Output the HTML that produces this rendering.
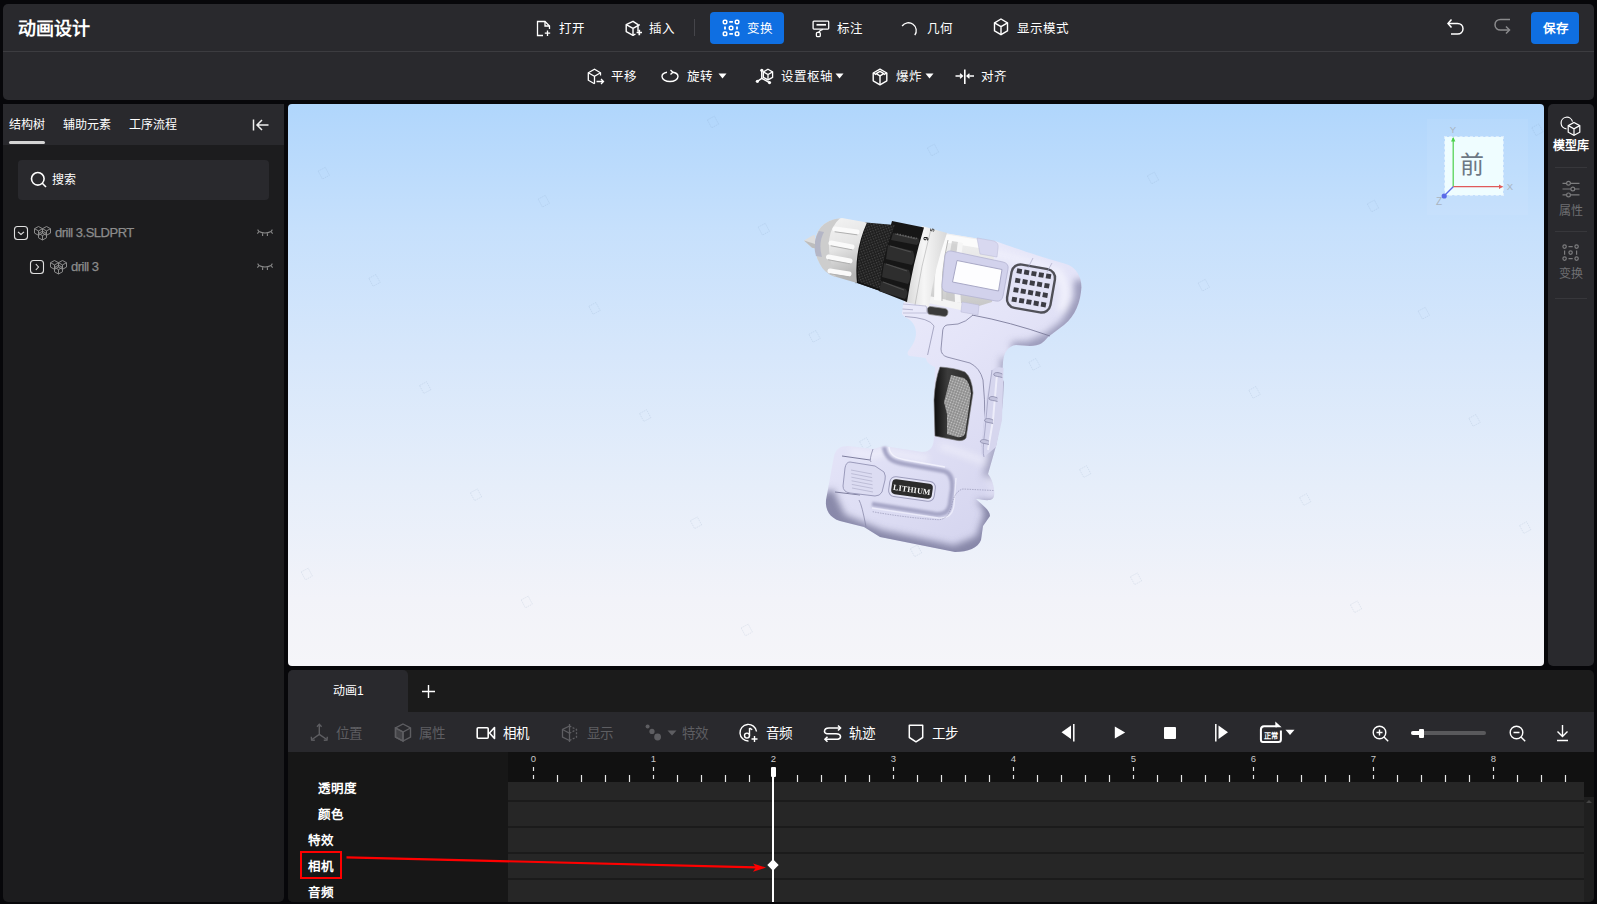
<!DOCTYPE html>
<html lang="zh-CN"><head><meta charset="utf-8">
<style>
*{box-sizing:border-box;margin:0;padding:0}
html,body{width:1597px;height:904px;overflow:hidden;background:#07070a;font-family:"Liberation Sans",sans-serif;color:#fff}
.abs{position:absolute}
.panel{background:#29292d}
.t{position:absolute;white-space:nowrap;line-height:1;font-weight:500}
svg{position:absolute;overflow:visible}
</style></head><body>

<!-- top toolbar -->
<div class="abs panel" style="left:3px;top:4px;width:1591px;height:96px;border-radius:5px"></div>
<div class="abs" style="left:3px;top:51px;width:1591px;height:1px;background:#3c3c40"></div>
<div class="t" style="left:18px;top:19.5px;font-size:18px;font-weight:bold">动画设计</div>

<!-- top row items -->
<svg style="left:536px;top:20px" width="16" height="17" viewBox="0 0 16 17" fill="none" stroke="#fff" stroke-width="1.3">
<path d="M7 15.5H1.5V1.5H9L13.5 6V9"/><path d="M9 1.5V6H13.5"/><path d="M11.5 10.5V16M8.8 13.2H14.2"/></svg>
<div class="t" style="left:559px;top:23px;font-size:12.5px">打开</div>
<svg style="left:624px;top:18px" width="20" height="20" viewBox="0 0 20 20" fill="none" stroke="#fff" stroke-width="1.4" stroke-linejoin="round">
<path d="M14 13.5V6.6L9 3.3L2.2 6.6V13.6L9 17.4L11.5 16"/><path d="M2.2 6.6L9 10.4L15.8 6.6M9 10.4V17.4"/><path d="M15.3 11.8V17.2M12.6 14.5H18" stroke-width="1.7"/></svg>
<div class="t" style="left:649px;top:23px;font-size:12.5px">插入</div>
<div class="abs" style="left:694px;top:19px;width:1px;height:17px;background:#45454a"></div>
<div class="abs" style="left:710px;top:12px;width:74px;height:32px;background:#0f6fe2;border-radius:4px"></div>
<svg style="left:722px;top:19px" width="18" height="18" viewBox="0 0 18 18" fill="none" stroke="#fff" stroke-width="1.5">
<rect x="1.3" y="1.2" width="3.5" height="3.5" rx="1.1"/><rect x="13.3" y="1.2" width="3.5" height="3.5" rx="1.1"/><rect x="1.3" y="13" width="3.5" height="3.5" rx="1.1"/><rect x="13.3" y="13" width="3.5" height="3.5" rx="1.1"/><rect x="7.3" y="7.2" width="3.5" height="3.5" rx="1.1"/>
<path d="M7.3 2.9H10.9M7.3 14.8H10.9M3 7.4V10.6M15 7.4V10.6" stroke-width="1.8"/></svg>
<div class="t" style="left:747px;top:23px;font-size:12.5px">变换</div>
<svg style="left:812px;top:20px" width="18" height="18" viewBox="0 0 18 18" fill="none" stroke="#fff" stroke-width="1.3">
<rect x="1.1" y="1.2" width="15.6" height="7.9" rx="0.8"/><path d="M4.5 4.8H14" stroke-width="1.7"/><path d="M10.8 9.3Q8 10.2 6.6 12.4"/><rect x="4.4" y="12.4" width="3.9" height="4.3" rx="1.2"/></svg>
<div class="t" style="left:837px;top:23px;font-size:12.5px">标注</div>
<svg style="left:901px;top:21px" width="18" height="16" viewBox="0 0 18 16" fill="none" stroke="#fff" stroke-width="1.3">
<path d="M1.1 5.0A7.8 7.8 0 1 1 13.8 14.1"/></svg>
<div class="t" style="left:927px;top:23px;font-size:12.5px">几何</div>
<svg style="left:993px;top:18px" width="16" height="18" viewBox="0 0 16 18" fill="none" stroke="#fff" stroke-width="1.4">
<path d="M8 1L14.5 4.8V12.8L8 16.6L1.5 12.8V4.8Z"/><path d="M1.5 4.8L8 8.6L14.5 4.8M8 8.6V16.6"/></svg>
<div class="t" style="left:1017px;top:23px;font-size:12.5px">显示模式</div>
<svg style="left:1446px;top:18px" width="19" height="18" viewBox="0 0 19 18" fill="none" stroke="#fff" stroke-width="1.5">
<path d="M5.5 1.5L2 5.5L5.5 9.5"/><path d="M2 5.5H11.5C14.5 5.5 17 7.5 17 10.8C17 14 14.5 16 11.5 16H5"/></svg>
<svg style="left:1493px;top:18px" width="19" height="18" viewBox="0 0 19 18" fill="none" stroke="#8a8a8c" stroke-width="1.5">
<path d="M17 1.5H7.5C4.5 1.5 2 3.5 2 6.8C2 10 4.5 12 7.5 12H16"/><path d="M13 8.5L16.5 12L13 15.5"/></svg>
<div class="abs" style="left:1531px;top:12px;width:48px;height:32px;background:#0f6fe2;border-radius:4px"></div>
<div class="t" style="left:1543px;top:23px;font-size:12.5px;font-weight:bold">保存</div>

<!-- second row -->
<svg style="left:587px;top:68px" width="18" height="18" viewBox="0 0 18 18" fill="none" stroke="#fff" stroke-width="1.3">
<path d="M13.5 7.5V4.8L7.5 1.3L1.3 4.8V12.2L7.5 15.8"/><path d="M1.3 4.8L7.5 8.3L13.5 4.8M7.5 8.3V15.8"/><path d="M9.5 13.5H16.5M14 11L16.5 13.5L14 16"/></svg>
<div class="t" style="left:611px;top:71px;font-size:12.5px">平移</div>
<svg style="left:661px;top:69px" width="18" height="14" viewBox="0 0 18 14" fill="none" stroke="#fff" stroke-width="1.4">
<path d="M6 3.3C3 3.8 1 5.3 1 7.5C1 10.3 4.6 12.5 9 12.5C13.4 12.5 17 10.3 17 7.5C17 5.2 14.8 3.6 11.5 3.2"/><path d="M9.5 1L11.8 3.2L9.5 5.4"/></svg>
<div class="t" style="left:687px;top:71px;font-size:12.5px">旋转</div>
<svg style="left:718px;top:73px" width="9" height="6" viewBox="0 0 9 6"><path d="M0.5 0.5H8.5L4.5 5.5Z" fill="#fff"/></svg>
<svg style="left:750px;top:62px" width="30" height="28" viewBox="0 0 30 28" fill="none" stroke="#fff" stroke-width="1.3">
<path d="M18 7.3L22.6 9.9V15.3L18 17.9L13.4 15.3V9.9Z"/><path d="M13.4 9.9L18 12.5L22.6 9.9M18 12.5V17.9"/><path d="M11.8 8.2V16.4L7.4 19.3M11.8 16.4L19.5 20.6" stroke-width="1.5"/><circle cx="11.8" cy="8.3" r="1.6" fill="#fff" stroke="none"/><circle cx="7.4" cy="19.3" r="1.6" fill="#fff" stroke="none"/><circle cx="19.5" cy="20.6" r="1.6" fill="#fff" stroke="none"/></svg>
<div class="t" style="left:781px;top:71px;font-size:12.5px">设置枢轴</div>
<svg style="left:835px;top:73px" width="9" height="6" viewBox="0 0 9 6"><path d="M0.5 0.5H8.5L4.5 5.5Z" fill="#fff"/></svg>
<svg style="left:872px;top:68px" width="16" height="18" viewBox="0 0 16 18" fill="none" stroke="#fff" stroke-width="1.4" stroke-linejoin="round">
<path d="M8 1.2L14.8 5V12.8L8 16.8L1.2 12.8V5Z"/><path d="M8 3.4L11.8 5.6L8 7.8L4.2 5.6Z"/><path d="M8 7.8V16.8M1.2 5L4.2 6.6M14.8 5L11.8 6.6"/></svg>
<div class="t" style="left:896px;top:71px;font-size:12.5px">爆炸</div>
<svg style="left:925px;top:73px" width="9" height="6" viewBox="0 0 9 6"><path d="M0.5 0.5H8.5L4.5 5.5Z" fill="#fff"/></svg>
<svg style="left:955px;top:67px" width="20" height="18" viewBox="0 0 20 18" fill="none" stroke="#fff" stroke-width="1.3">
<path d="M9.8 2.5V17" stroke-width="1.6"/><path d="M0.5 9H7.5M5 6.8L7.5 9L5 11.2M19 9H12M14.5 6.8L12 9L14.5 11.2"/></svg>
<div class="t" style="left:981px;top:71px;font-size:12.5px">对齐</div>

<!-- left panel -->
<div class="abs" style="left:3px;top:104px;width:281px;height:798px;background:#1c1c1e;border-radius:0 0 5px 5px"></div>
<div class="abs panel" style="left:3px;top:104px;width:281px;height:41px"></div>
<div class="t" style="left:9px;top:118.5px;font-size:12px">结构树</div>
<div class="t" style="left:63px;top:118.5px;font-size:12px">辅助元素</div>
<div class="t" style="left:129px;top:118.5px;font-size:12px">工序流程</div>
<div class="abs" style="left:9px;top:141px;width:36px;height:3px;background:#d4d4d4;border-radius:1.5px"></div>
<svg style="left:252px;top:119px" width="18" height="12" viewBox="0 0 18 12" fill="none" stroke="#eee" stroke-width="1.5">
<path d="M1.5 0.5V11.5"/><path d="M16.5 6H5M10 1L5 6L10 11"/></svg>
<div class="abs panel" style="left:18px;top:160px;width:251px;height:40px;border-radius:4px"></div>
<svg style="left:30px;top:171px" width="18" height="18" viewBox="0 0 18 18" fill="none" stroke="#fff" stroke-width="1.6">
<circle cx="7.8" cy="7.8" r="6.3"/><path d="M12.3 12.3L16 16"/></svg>
<div class="t" style="left:52px;top:173.5px;font-size:12px">搜索</div>
<svg style="left:14px;top:226px" width="14" height="14" viewBox="0 0 14 14" fill="none" stroke="#e0e0e0" stroke-width="1.1">
<rect x="0.5" y="0.5" width="13" height="13" rx="3"/><path d="M4 5.8L7 8.5L10 5.8"/></svg>
<svg style="left:33.5px;top:225.5px" width="18" height="15" viewBox="0 0 18 15" fill="none" stroke="#8c8c8c" stroke-width="1"><path d="M4.5 0.5 L8.5 2.7 L8.5 7.1 L4.5 9.3 L0.5 7.1 L0.5 2.7Z M0.5 2.7 L4.5 4.9 L8.5 2.7 M4.5 4.9 V9.3 M12.5 0.5 L16.5 2.7 L16.5 7.1 L12.5 9.3 L8.5 7.1 L8.5 2.7Z M8.5 2.7 L12.5 4.9 L16.5 2.7 M12.5 4.9 V9.3 M8.5 5.2 L12.5 7.4 L12.5 11.8 L8.5 14.0 L4.5 11.8 L4.5 7.4Z M4.5 7.4 L8.5 9.6 L12.5 7.4 M8.5 9.6 V14.0"/></svg>
<div class="t" style="left:55px;top:226px;font-size:13px;color:#8c8c8c;letter-spacing:-0.5px;-webkit-text-stroke:0.25px #8c8c8c">drill 3.SLDPRT</div>
<svg style="left:30px;top:260px" width="14" height="14" viewBox="0 0 14 14" fill="none" stroke="#e0e0e0" stroke-width="1.1">
<rect x="0.5" y="0.5" width="13" height="13" rx="3"/><path d="M5.8 4L8.5 7L5.8 10"/></svg>
<svg style="left:49.5px;top:259.5px" width="18" height="15" viewBox="0 0 18 15" fill="none" stroke="#8c8c8c" stroke-width="1"><path d="M4.5 0.5 L8.5 2.7 L8.5 7.1 L4.5 9.3 L0.5 7.1 L0.5 2.7Z M0.5 2.7 L4.5 4.9 L8.5 2.7 M4.5 4.9 V9.3 M12.5 0.5 L16.5 2.7 L16.5 7.1 L12.5 9.3 L8.5 7.1 L8.5 2.7Z M8.5 2.7 L12.5 4.9 L16.5 2.7 M12.5 4.9 V9.3 M8.5 5.2 L12.5 7.4 L12.5 11.8 L8.5 14.0 L4.5 11.8 L4.5 7.4Z M4.5 7.4 L8.5 9.6 L12.5 7.4 M8.5 9.6 V14.0"/></svg>
<div class="t" style="left:71px;top:260px;font-size:13px;color:#8c8c8c;letter-spacing:-0.5px;-webkit-text-stroke:0.25px #8c8c8c">drill 3</div>
<svg style="left:256px;top:228px" width="18" height="10" viewBox="0 0 18 10" fill="none" stroke="#8a8a8a" stroke-width="1.1">
<path d="M3 3.5Q9 6.6 15 3.5M3 3.5L1.6 1.6M3 3.5L1.4 5.6M15 3.5L16.4 1.6M15 3.5L16.6 5.6M6.6 4.9V8M11.4 4.9V8"/></svg>
<svg style="left:256px;top:262px" width="18" height="10" viewBox="0 0 18 10" fill="none" stroke="#8a8a8a" stroke-width="1.1">
<path d="M3 3.5Q9 6.6 15 3.5M3 3.5L1.6 1.6M3 3.5L1.4 5.6M15 3.5L16.4 1.6M15 3.5L16.6 5.6M6.6 4.9V8M11.4 4.9V8"/></svg>

<!-- viewport -->
<div class="abs" style="left:288px;top:104px;width:1256px;height:562px;border-radius:4px;background:linear-gradient(#b0d6fc 0%,#c6e0fc 22%,#d7e7fb 45%,#e6eefa 68%,#f2f3f9 88%,#f5f5f9 100%)"></div>

<!-- wm --><svg style="left:0;top:0" width="1597" height="904" viewBox="0 0 1597 904"><rect x="709.0" y="117.5" width="8" height="9" transform="rotate(-28 713.0 122.0)" fill="none" stroke="#6a8aaa" stroke-opacity="0.16" stroke-width="0.8" stroke-dasharray="1.5 0.8"/><rect x="929.0" y="145.5" width="8" height="9" transform="rotate(-28 933.0 150.0)" fill="none" stroke="#6a8aaa" stroke-opacity="0.16" stroke-width="0.8" stroke-dasharray="1.5 0.8"/><rect x="1149.0" y="173.5" width="8" height="9" transform="rotate(-28 1153.0 178.0)" fill="none" stroke="#6a8aaa" stroke-opacity="0.16" stroke-width="0.8" stroke-dasharray="1.5 0.8"/><rect x="1369.0" y="201.5" width="8" height="9" transform="rotate(-28 1373.0 206.0)" fill="none" stroke="#6a8aaa" stroke-opacity="0.16" stroke-width="0.8" stroke-dasharray="1.5 0.8"/><rect x="319.8" y="168.7" width="8" height="9" transform="rotate(-28 323.8 173.2)" fill="none" stroke="#6a8aaa" stroke-opacity="0.16" stroke-width="0.8" stroke-dasharray="1.5 0.8"/><rect x="539.8" y="196.7" width="8" height="9" transform="rotate(-28 543.8 201.2)" fill="none" stroke="#6a8aaa" stroke-opacity="0.16" stroke-width="0.8" stroke-dasharray="1.5 0.8"/><rect x="759.8" y="224.7" width="8" height="9" transform="rotate(-28 763.8 229.2)" fill="none" stroke="#6a8aaa" stroke-opacity="0.16" stroke-width="0.8" stroke-dasharray="1.5 0.8"/><rect x="979.8" y="252.7" width="8" height="9" transform="rotate(-28 983.8 257.2)" fill="none" stroke="#6a8aaa" stroke-opacity="0.16" stroke-width="0.8" stroke-dasharray="1.5 0.8"/><rect x="1199.8" y="280.7" width="8" height="9" transform="rotate(-28 1203.8 285.2)" fill="none" stroke="#6a8aaa" stroke-opacity="0.16" stroke-width="0.8" stroke-dasharray="1.5 0.8"/><rect x="1419.8" y="308.7" width="8" height="9" transform="rotate(-28 1423.8 313.2)" fill="none" stroke="#6a8aaa" stroke-opacity="0.16" stroke-width="0.8" stroke-dasharray="1.5 0.8"/><rect x="370.5" y="275.9" width="8" height="9" transform="rotate(-28 374.5 280.4)" fill="none" stroke="#6a8aaa" stroke-opacity="0.16" stroke-width="0.8" stroke-dasharray="1.5 0.8"/><rect x="590.5" y="303.9" width="8" height="9" transform="rotate(-28 594.5 308.4)" fill="none" stroke="#6a8aaa" stroke-opacity="0.16" stroke-width="0.8" stroke-dasharray="1.5 0.8"/><rect x="810.5" y="331.9" width="8" height="9" transform="rotate(-28 814.5 336.4)" fill="none" stroke="#6a8aaa" stroke-opacity="0.16" stroke-width="0.8" stroke-dasharray="1.5 0.8"/><rect x="1030.5" y="359.9" width="8" height="9" transform="rotate(-28 1034.5 364.4)" fill="none" stroke="#6a8aaa" stroke-opacity="0.16" stroke-width="0.8" stroke-dasharray="1.5 0.8"/><rect x="1250.5" y="387.9" width="8" height="9" transform="rotate(-28 1254.5 392.4)" fill="none" stroke="#6a8aaa" stroke-opacity="0.16" stroke-width="0.8" stroke-dasharray="1.5 0.8"/><rect x="1470.5" y="415.9" width="8" height="9" transform="rotate(-28 1474.5 420.4)" fill="none" stroke="#6a8aaa" stroke-opacity="0.16" stroke-width="0.8" stroke-dasharray="1.5 0.8"/><rect x="421.2" y="383.1" width="8" height="9" transform="rotate(-28 425.2 387.6)" fill="none" stroke="#6a8aaa" stroke-opacity="0.16" stroke-width="0.8" stroke-dasharray="1.5 0.8"/><rect x="641.2" y="411.1" width="8" height="9" transform="rotate(-28 645.2 415.6)" fill="none" stroke="#6a8aaa" stroke-opacity="0.16" stroke-width="0.8" stroke-dasharray="1.5 0.8"/><rect x="861.2" y="439.1" width="8" height="9" transform="rotate(-28 865.2 443.6)" fill="none" stroke="#6a8aaa" stroke-opacity="0.16" stroke-width="0.8" stroke-dasharray="1.5 0.8"/><rect x="1081.2" y="467.1" width="8" height="9" transform="rotate(-28 1085.2 471.6)" fill="none" stroke="#6a8aaa" stroke-opacity="0.16" stroke-width="0.8" stroke-dasharray="1.5 0.8"/><rect x="1301.2" y="495.1" width="8" height="9" transform="rotate(-28 1305.2 499.6)" fill="none" stroke="#6a8aaa" stroke-opacity="0.16" stroke-width="0.8" stroke-dasharray="1.5 0.8"/><rect x="1521.2" y="523.1" width="8" height="9" transform="rotate(-28 1525.2 527.6)" fill="none" stroke="#6a8aaa" stroke-opacity="0.16" stroke-width="0.8" stroke-dasharray="1.5 0.8"/><rect x="472.0" y="490.3" width="8" height="9" transform="rotate(-28 476.0 494.8)" fill="none" stroke="#6a8aaa" stroke-opacity="0.16" stroke-width="0.8" stroke-dasharray="1.5 0.8"/><rect x="692.0" y="518.3" width="8" height="9" transform="rotate(-28 696.0 522.8)" fill="none" stroke="#6a8aaa" stroke-opacity="0.16" stroke-width="0.8" stroke-dasharray="1.5 0.8"/><rect x="912.0" y="546.3" width="8" height="9" transform="rotate(-28 916.0 550.8)" fill="none" stroke="#6a8aaa" stroke-opacity="0.16" stroke-width="0.8" stroke-dasharray="1.5 0.8"/><rect x="1132.0" y="574.3" width="8" height="9" transform="rotate(-28 1136.0 578.8)" fill="none" stroke="#6a8aaa" stroke-opacity="0.16" stroke-width="0.8" stroke-dasharray="1.5 0.8"/><rect x="1352.0" y="602.3" width="8" height="9" transform="rotate(-28 1356.0 606.8)" fill="none" stroke="#6a8aaa" stroke-opacity="0.16" stroke-width="0.8" stroke-dasharray="1.5 0.8"/><rect x="302.8" y="569.5" width="8" height="9" transform="rotate(-28 306.8 574.0)" fill="none" stroke="#6a8aaa" stroke-opacity="0.16" stroke-width="0.8" stroke-dasharray="1.5 0.8"/><rect x="522.8" y="597.5" width="8" height="9" transform="rotate(-28 526.8 602.0)" fill="none" stroke="#6a8aaa" stroke-opacity="0.16" stroke-width="0.8" stroke-dasharray="1.5 0.8"/><rect x="742.8" y="625.5" width="8" height="9" transform="rotate(-28 746.8 630.0)" fill="none" stroke="#6a8aaa" stroke-opacity="0.16" stroke-width="0.8" stroke-dasharray="1.5 0.8"/><rect x="1533.4" y="125.30000000000001" width="8" height="9" transform="rotate(-28 1537.4 129.8)" fill="none" stroke="#6a8aaa" stroke-opacity="0.16" stroke-width="0.8" stroke-dasharray="1.5 0.8"/></svg><!-- /wm -->
<!-- drill -->
<svg style="left:780px;top:200px" width="320" height="370" viewBox="780 200 320 370">
<defs>
<clipPath id="silc"><path d="M944 233 L980 239 L995 241 C1010 246 1030 254 1066 264 C1078 268 1083 280 1081 292 C1079 308 1072 320 1060 328 L1048 337 C1044 342 1040 346 1030 346 L1016 345 C1008 346 1004 352 1003 362 L1002 378 L1004 382 L1003 400 L1001 420 L996 446 L988 474 C993 480 995 490 994 496 C993 502 985 500 976 499 C982 505 990 510 990 516 L983 526 L981 540 C978 548 968 552 955 552 L880 537 L864 527 L840 521 C830 518 825 510 826 500 L834 456 C836 449 840 446 848 446 L873 449 L884 446 L922 452 C931 452 934 446 934 436 L934 400 L935 367 C930 365 926 362 926 358 L910 356 C907 355.5 907 352 909 350 C913 345 916 339 916 333 C916 326 912 320 905 317 L902 314 L903 304 Z"/></clipPath>
<linearGradient id="lav" x1="0" y1="0" x2="0.6" y2="1"><stop offset="0" stop-color="#f0f0fc"/><stop offset="0.5" stop-color="#e4e4f8"/><stop offset="1" stop-color="#d4d4ee"/></linearGradient>
<linearGradient id="shadeB" x1="0" y1="0" x2="0" y2="1"><stop offset="0" stop-color="#9090b0" stop-opacity="0"/><stop offset="1" stop-color="#8080a2" stop-opacity="0.9"/></linearGradient>
<linearGradient id="shadeR" x1="0" y1="0" x2="1" y2="0"><stop offset="0" stop-color="#9898b8" stop-opacity="0"/><stop offset="1" stop-color="#9090b0" stop-opacity="0.8"/></linearGradient>
<linearGradient id="chuck" x1="0" y1="0" x2="0.3" y2="1"><stop offset="0" stop-color="#f6f6f6"/><stop offset="0.55" stop-color="#e4e4e4"/><stop offset="1" stop-color="#b4b4b4"/></linearGradient>
<linearGradient id="ring" x1="0" y1="0" x2="1" y2="0"><stop offset="0" stop-color="#d4d4d4"/><stop offset="0.45" stop-color="#f6f6f6"/><stop offset="1" stop-color="#d8d8d8"/></linearGradient>
<linearGradient id="gear" x1="0" y1="0" x2="0" y2="1"><stop offset="0" stop-color="#f2f2f2"/><stop offset="0.5" stop-color="#e4e4e4"/><stop offset="1" stop-color="#c4c4c4"/></linearGradient>
<linearGradient id="grip" x1="0" y1="0" x2="1" y2="0"><stop offset="0" stop-color="#0e0e0e"/><stop offset="0.35" stop-color="#3c3c3c"/><stop offset="1" stop-color="#2a2a2a"/></linearGradient>
<pattern id="knurl" width="2.6" height="2.6" patternUnits="userSpaceOnUse" patternTransform="rotate(-20)"><rect width="2.6" height="2.6" fill="#1e1e1e"/><rect width="1.3" height="1.3" fill="#454545"/></pattern>
<pattern id="mesh" width="2.6" height="2.6" patternUnits="userSpaceOnUse" patternTransform="rotate(20)"><rect width="2.6" height="2.6" fill="#8a8a8a"/><circle cx="1.3" cy="1.3" r="0.8" fill="#cacaca"/></pattern>
<radialGradient id="hl" cx="0.5" cy="0.5" r="0.5"><stop offset="0" stop-color="#fafaff" stop-opacity="0.9"/><stop offset="1" stop-color="#fafaff" stop-opacity="0"/></radialGradient>
<filter id="bl1" x="-20%" y="-20%" width="140%" height="140%"><feGaussianBlur stdDeviation="1.2"/></filter>
<filter id="bl4" x="-20%" y="-20%" width="140%" height="140%"><feGaussianBlur stdDeviation="3.5"/></filter>
</defs>
<path d="M944 233 L980 239 L995 241 C1010 246 1030 254 1066 264 C1078 268 1083 280 1081 292 C1079 308 1072 320 1060 328 L1048 337 C1044 342 1040 346 1030 346 L1016 345 C1008 346 1004 352 1003 362 L1002 378 L1004 382 L1003 400 L1001 420 L996 446 L988 474 C993 480 995 490 994 496 C993 502 985 500 976 499 C982 505 990 510 990 516 L983 526 L981 540 C978 548 968 552 955 552 L880 537 L864 527 L840 521 C830 518 825 510 826 500 L834 456 C836 449 840 446 848 446 L873 449 L884 446 L922 452 C931 452 934 446 934 436 L934 400 L935 367 C930 365 926 362 926 358 L910 356 C907 355.5 907 352 909 350 C913 345 916 339 916 333 C916 326 912 320 905 317 L902 314 L903 304 Z" fill="url(#lav)"/>
<g clip-path="url(#silc)">
<g filter="url(#bl4)">
<path d="M1012 350 L1030 349 L1050 340 L1068 326 L1082 300 L1082 280" stroke="#8c8cae" stroke-width="16" fill="none" opacity="0.8"/>
<path d="M1056 272 C1066 278 1068 300 1060 310" stroke="#fbfbff" stroke-width="6" fill="none" opacity="0.8"/>
<path d="M1006 358 L1005 420 L996 452 L988 478" stroke="#9494b4" stroke-width="12" fill="none" opacity="0.75"/>
<path d="M822 494 L836 524 L880 542 L955 558 L986 545 L996 516 L994 500" stroke="#7a7a9c" stroke-width="24" fill="none" opacity="0.85"/>
<path d="M850 452 L872 455 L884 452 L928 459" stroke="#fafaff" stroke-width="5" fill="none" opacity="0.7"/>
<path d="M990 252 L1030 262 L1060 272" stroke="#fafaff" stroke-width="5" fill="none" opacity="0.6"/>
<path d="M940 446 Q960 452 985 462" stroke="#fafaff" stroke-width="5" fill="none" opacity="0.6"/>
<path d="M978 501 C984 504 988 508 989 514" stroke="#7a7a9c" stroke-width="5" fill="none" opacity="0.8"/>
<path d="M988 476 C992 482 993 490 992 496" stroke="#f6f6ff" stroke-width="3" fill="none" opacity="0.6"/>
</g>
</g>
<path d="M972.8 315.2 Q966 322 958 324 L947 325 Q942.5 326 942.5 333 L941 349 Q941 355 947 357 L970 363 Q980 368 983 380 Q987 420 982 447" stroke="#7c7c9c" stroke-width="0.8" fill="none"/>
<path d="M905 316.5 Q930 318 934 326 L927.6 355" stroke="#8c8cac" stroke-width="0.7" fill="none"/>
<path d="M902.5 309 L913 309.8" stroke="#a0a0c0" stroke-width="0.7" fill="none"/>
<path d="M972 315 Q1010 322 1050 336" stroke="#7a7a9a" stroke-width="0.9" fill="none"/>
<path d="M992 370 Q996 366 1003.5 368 L1002 420 L996 447 L984 457 Q980 455 981 448 L986 400 Z" fill="#d6d6ee"/>
<path d="M992 370 Q987 400 985 430 Q982 452 984 457" stroke="#9a9aba" stroke-width="0.7" fill="none"/>
<path d="M997 374 L993 420 L988 450" stroke="#f6f6ff" stroke-width="2" fill="none" opacity="0.7"/>
<path d="M1002.3 374 C997.3 371.5 993.3 372.5 993.8 375 C994.8 376.5 999.3 376.5 1002.3 377.5" stroke="#8a8aaa" stroke-width="0.8" fill="#c4c4de"/>
<path d="M997.5 398 C992.5 395.5 988.5 396.5 989.0 399 C990.0 400.5 994.5 400.5 997.5 401.5" stroke="#8a8aaa" stroke-width="0.8" fill="#c4c4de"/>
<path d="M993.1 420 C988.1 417.5 984.1 418.5 984.6 421 C985.6 422.5 990.1 422.5 993.1 423.5" stroke="#8a8aaa" stroke-width="0.8" fill="#c4c4de"/>
<path d="M988.9 441 C983.9 438.5 979.9 439.5 980.4 442 C981.4 443.5 985.9 443.5 988.9 444.5" stroke="#8a8aaa" stroke-width="0.8" fill="#c4c4de"/>
<path d="M926 230 L980 239 L994 252 L992 302 L966 310 L925 302 Z" fill="url(#gear)"/>
<path d="M944 234 L980 240 L979 248 L943 242Z" fill="#fbfbfb"/><path d="M929 296 L966 304 L965 311 L928 303Z" fill="#f4f4f4"/>
<path d="M941 238 Q934 268 934 300 L942 301 Q941 270 948 240Z" fill="#fafafa"/>
<path d="M952 241 Q946 270 946 300 L955 302 Q953 272 958 242Z" fill="#c8c8c8" opacity="0.7"/>
<path d="M958 242 Q953 272 955 302 L961 303 Q958 272 963 243Z" fill="#f6f6f6"/>
<path d="M948 240 Q941 270 942 301" stroke="#b8b8b8" stroke-width="1" fill="none"/>
<path d="M977 238 L994 241 Q999 243 998 248 L997 257 L980 254Z" fill="#d8d8f0" stroke="#b8b8d4" stroke-width="0.5"/><path d="M962 302 L979 305 L978 315 L961 312Z" fill="#d4d4ee" stroke="#b8b8d4" stroke-width="0.5"/>
<path d="M951 251 L1003 262 Q1009 263.5 1008 269 L1003 296 Q1001.5 302 996 301 L947 292 Q941.5 291 942 285 L945 256 Q946 250.5 951 251Z" fill="#d2d2ec" stroke="#b4b4d2" stroke-width="0.8"/>
<path d="M957 260.5 L1002 269.5 L998.5 291 L952.5 282 Z" fill="#fdfdff" stroke="#a8a8c6" stroke-width="1"/>
<g transform="rotate(10 1031 288.5)"><rect x="1009" y="266.5" width="44" height="44" rx="9" fill="#e2e2f6" stroke="#505058" stroke-width="2.4"/>
<rect x="1014.0" y="271.0" width="5" height="4.8" fill="#3c3c44"/>
<rect x="1021.4" y="271.0" width="5" height="4.8" fill="#3c3c44"/>
<rect x="1028.8" y="271.0" width="5" height="4.8" fill="#3c3c44"/>
<rect x="1036.2" y="271.0" width="5" height="4.8" fill="#3c3c44"/>
<rect x="1043.6" y="271.0" width="5" height="4.8" fill="#3c3c44"/>
<rect x="1014.0" y="280.6" width="5" height="4.8" fill="#3c3c44"/>
<rect x="1021.4" y="280.6" width="5" height="4.8" fill="#3c3c44"/>
<rect x="1028.8" y="280.6" width="5" height="4.8" fill="#3c3c44"/>
<rect x="1036.2" y="280.6" width="5" height="4.8" fill="#3c3c44"/>
<rect x="1043.6" y="280.6" width="5" height="4.8" fill="#3c3c44"/>
<rect x="1014.0" y="290.2" width="5" height="4.8" fill="#3c3c44"/>
<rect x="1021.4" y="290.2" width="5" height="4.8" fill="#3c3c44"/>
<rect x="1028.8" y="290.2" width="5" height="4.8" fill="#3c3c44"/>
<rect x="1036.2" y="290.2" width="5" height="4.8" fill="#3c3c44"/>
<rect x="1043.6" y="290.2" width="5" height="4.8" fill="#3c3c44"/>
<rect x="1014.0" y="299.8" width="5" height="4.8" fill="#3c3c44"/>
<rect x="1021.4" y="299.8" width="5" height="4.8" fill="#3c3c44"/>
<rect x="1028.8" y="299.8" width="5" height="4.8" fill="#3c3c44"/>
<rect x="1036.2" y="299.8" width="5" height="4.8" fill="#3c3c44"/>
<rect x="1043.6" y="299.8" width="5" height="4.8" fill="#3c3c44"/>
</g>
<path d="M1033 258 L1028 268 M1052 263 L1047 272" stroke="#a0a0c0" stroke-width="0.6"/>
<path d="M922 226 L947 233 Q934 270 929 307 L905 302 Q912.5 265 922 226Z" fill="url(#ring)"/>
<path d="M931 229 Q921 266 915 305" stroke="#a0a0a0" stroke-width="0.5" fill="none"/>
<text x="0" y="0" font-size="7" font-weight="bold" fill="#111" font-family="Liberation Sans" transform="translate(928 241) rotate(-80)">9</text>
<text x="0" y="0" font-size="6" font-weight="bold" fill="#333" font-family="Liberation Sans" transform="translate(934 232) rotate(-80)">5</text>
<path d="M892 221 L924 227.5 Q912.5 265 907 302 L879 291 Q881 257 892 221Z" fill="#161616"/>
<path d="M893 233 L918 238 Q921 241.5 917 245 L891 240 Z" fill="#2e2e2e"/>
<path d="M895 234 L916 239" stroke="#4e4e4e" stroke-width="1.2"/>
<path d="M888 245 L913 251 Q916 258.0 912 265 L886 259 Z" fill="#2e2e2e"/>
<path d="M890 246 L911 252" stroke="#4e4e4e" stroke-width="1.2"/>
<path d="M884 263 L909 270 Q912 277.0 908 284 L882 277 Z" fill="#2e2e2e"/>
<path d="M886 264 L907 271" stroke="#4e4e4e" stroke-width="1.2"/>
<path d="M881 281 L906 289 Q909 294.0 905 299 L879 291 Z" fill="#2e2e2e"/>
<path d="M883 282 L904 290" stroke="#4e4e4e" stroke-width="1.2"/>
<path d="M897 234 L917 238.5" stroke="#6a6a6a" stroke-width="1.6" stroke-dasharray="1.2 1.6" opacity="0.9"/>
<path d="M866 222.5 L895 225 Q881 257 880 291 L857 283 Q853.7 252 866 222.5Z" fill="url(#knurl)"/>
<path d="M866 222.5 Q853.7 252 857 283" stroke="#0e0e0e" stroke-width="2.5" fill="none"/>
<path d="M857 282 L880 290" stroke="#111" stroke-width="1.5" fill="none"/>
<path d="M842 218 L867 222.5 Q853.7 252 857 283 L833 276 Q824 272 820 264 Q815 256 815 245 Q815 234 821 227 Q828 219.5 842 218Z" fill="url(#chuck)"/>
<path d="M821 227 Q828 219.5 840 218.3 Q831 226 829 240 Q828 260 836 277 L833 276 Q824 272 820 264 Q815 256 815 245 Q815 234 821 227Z" fill="#cdcdcd"/>
<path d="M835 229 L857 232" stroke="#fafafa" stroke-width="5" stroke-linecap="round"/><path d="M835 231.8 L857 234.8" stroke="#b0b0b0" stroke-width="1" stroke-linecap="round"/>
<path d="M831 243 L852 247" stroke="#fafafa" stroke-width="5" stroke-linecap="round"/><path d="M831 245.8 L852 249.8" stroke="#b0b0b0" stroke-width="1" stroke-linecap="round"/>
<path d="M828.5 257 L850 261" stroke="#fafafa" stroke-width="5" stroke-linecap="round"/><path d="M828.5 259.8 L850 263.8" stroke="#b0b0b0" stroke-width="1" stroke-linecap="round"/>
<path d="M830 271 L849 274" stroke="#fafafa" stroke-width="5" stroke-linecap="round"/><path d="M830 273.8 L849 276.8" stroke="#b0b0b0" stroke-width="1" stroke-linecap="round"/>
<path d="M819 231 Q812 243 816 256 L822 257 Q818 243 824 232 Z" fill="#b4b6c6"/>
<path d="M804 240.5 L812.5 235.5 L815 235 L815 248.5 L812 247.8 Z" fill="#dedede"/>
<path d="M804 240.5 L812 247.8 L815 248.5 L815 244 Z" fill="#bdbdbd"/>
<g transform="rotate(8 937.5 311.5)"><rect x="927" y="307.5" width="21" height="8" rx="4" fill="#3a3a3a" stroke="#888" stroke-width="0.7"/></g>
<path d="M903 304 L926 306 L928 313 L903 313" stroke="#a8a8c8" stroke-width="0.6" fill="none"/>
<path d="M940 367 Q955 368 965 372 Q972 378 973 393 L966 438 Q963 442 955 440 L935 436 L934 400 Q935 380 940 367Z" fill="url(#grip)" stroke="#777" stroke-width="0.6"/>
<path d="M951 375 L964 378 Q970 382 971 394 L965 434 Q962 438 957 437 L947 434 L947 414 L944 402 Z" fill="url(#mesh)"/>
<path d="M842 456 L870 460 M835 492 L860 495" stroke="#7e7e9e" stroke-width="1" fill="none"/>
<path d="M873 449 Q869 460 871 462 M866 527 Q862 505 859 500" stroke="#8a8aaa" stroke-width="0.8" fill="none"/>
<path d="M850 462 L875 466 L884 472 Q886 476 885 480 L882 492 Q880 496 875 496 L850 493 Q843 492 843 486 L845 468 Q846 462 850 462Z" fill="#dcdcf2" stroke="#9a9aba" stroke-width="1"/>
<path d="M851.0 470.0 L872.0 474.0" stroke="#a8a8c4" stroke-width="0.6"/>
<path d="M851.2 473.6 L872.2 477.6" stroke="#a8a8c4" stroke-width="0.6"/>
<path d="M851.4 477.2 L872.4 481.2" stroke="#a8a8c4" stroke-width="0.6"/>
<path d="M851.6 480.8 L872.6 484.8" stroke="#a8a8c4" stroke-width="0.6"/>
<path d="M851.8 484.4 L872.8 488.4" stroke="#a8a8c4" stroke-width="0.6"/>
<path d="M852.0 488.0 L873.0 492.0" stroke="#a8a8c4" stroke-width="0.6"/>
<path d="M884 447 C886 458 892 462 905 464 L944 471 C951 473 953 480 952 490 L950 504 C949 512 944 515 935 514 L872 504" stroke="#a6a6c6" stroke-width="4.5" fill="none" filter="url(#bl1)"/>
<path d="M889 447 C890 455 895 458 906 460 L945 467" stroke="#f6f6ff" stroke-width="1.4" fill="none" opacity="0.8"/>
<path d="M956 478 L954 505 C953 514 948 519 938 518 L872 508" stroke="#f4f4ff" stroke-width="1.4" fill="none" opacity="0.7"/>
<path d="M872.7 511.7 C890 515 920 519 939 519.7 C948 519 951 510 952 503.7 C954 495 958 490 963 489 L993.5 490.5" stroke="#8c8cac" stroke-width="0.6" fill="none" stroke-dasharray="1.5 1"/>
<g transform="rotate(8 912 489)"><rect x="889" y="479" width="46" height="20" rx="6" fill="#e4e4f6" stroke="#9c9cbc" stroke-width="1"/><rect x="891.5" y="481.5" width="41" height="15" rx="4" fill="#2b2b2b"/><text x="912" y="492.5" font-size="8" font-weight="bold" fill="#f4f4f4" text-anchor="middle" font-family="Liberation Serif" letter-spacing="0.2">LITHIUM</text></g>
</svg>
<!-- /drill -->
<!-- view cube -->
<div class="abs" style="left:1427px;top:119px;width:101px;height:96px;background:rgba(255,255,255,0.06)"></div>
<div class="abs" style="left:1445px;top:137px;width:58px;height:58px;background:#effdff;outline:1px dashed rgba(255,255,255,0.5)"></div>
<div class="t" style="left:1460px;top:153px;font-size:24px;color:#6d7884">前</div>
<svg style="left:1420px;top:112px" width="120" height="108" viewBox="0 0 120 108" fill="none">
<path d="M33.2 26V74.7" stroke="#4cd04c" stroke-width="1.2"/><path d="M31 29.5L33.2 25L35.4 29.5Z" fill="#4cd04c"/>
<path d="M33.2 74.7H82.5" stroke="#e05a5a" stroke-width="1.2"/><path d="M79 72.5L83 74.7L79 77Z" fill="#e05a5a"/>
<path d="M33.2 74.7L24 84" stroke="#5a6ae8" stroke-width="1.3"/><circle cx="24.2" cy="84" r="2.6" fill="#5a6ae8"/>
<text x="33" y="21" font-size="9.5" fill="#a9b4bf" text-anchor="middle" font-family="Liberation Sans">Y</text>
<text x="90" y="78" font-size="9.5" fill="#a9b4bf" text-anchor="middle" font-family="Liberation Sans">X</text>
<text x="19" y="93" font-size="10" fill="#a9b4bf" text-anchor="middle" font-family="Liberation Sans">Z</text>
</svg>
<!-- right sidebar -->
<div class="abs panel" style="left:1548px;top:104px;width:46px;height:562px;border-radius:5px"></div>
<svg style="left:1560px;top:115.5px" width="22" height="21" viewBox="0 0 22 21" fill="none" stroke="#fff" stroke-width="1.2">
<path d="M6.5 12.8A5.8 5.8 0 1 1 12.5 5.6"/><path d="M14 6.5L19.8 9.6V16.2L14 19.3L8.2 16.2V9.6Z"/><path d="M8.2 9.6L14 12.7L19.8 9.6M14 12.7V19.3"/></svg>
<div class="t" style="left:1553px;top:139.5px;font-size:12px;font-weight:bold">模型库</div>
<div class="abs" style="left:1555px;top:167px;width:32px;height:1px;background:#37373b"></div>
<svg style="left:1562px;top:179px" width="19" height="19" viewBox="0 0 19 19" fill="none" stroke="#7c7c7e" stroke-width="1.2">
<path d="M0.5 4.3H4.5M8.5 4.3H17.5M0.5 10H8.8M12.8 10H17.5M0.5 15.9H4.5M8.5 15.9H17.5"/><circle cx="6.5" cy="4.3" r="1.9"/><circle cx="10.8" cy="10" r="1.9"/><circle cx="6.5" cy="15.9" r="1.9"/></svg>
<div class="t" style="left:1559px;top:204.5px;font-size:12px;color:#6f6f72">属性</div>
<div class="abs" style="left:1555px;top:231px;width:32px;height:1px;background:#37373b"></div>
<svg style="left:1562px;top:244px" width="18" height="18" viewBox="0 0 18 18" fill="none" stroke="#7c7c7e" stroke-width="1.2">
<circle cx="2.6" cy="2.6" r="1.7"/><circle cx="14.6" cy="2.6" r="1.7"/><circle cx="2.6" cy="14.6" r="1.7"/><circle cx="14.6" cy="14.6" r="1.7"/><circle cx="8.6" cy="8.6" r="1.7"/><path d="M6.5 2.6H10.7M6.5 14.6H10.7M2.6 6.5V10.7M14.6 6.5V10.7"/></svg>
<div class="t" style="left:1559px;top:268px;font-size:12px;color:#6f6f72">变换</div>
<div class="abs" style="left:1555px;top:298px;width:32px;height:1px;background:#37373b"></div>

<!-- timeline -->
<div class="abs" style="left:288px;top:670px;width:1306px;height:232px;background:#1b1b1b;border-radius:5px"></div>
<div class="abs panel" style="left:288px;top:670px;width:120px;height:42px;border-radius:5px 5px 0 0"></div>
<div class="t" style="left:333px;top:684.5px;font-size:12px">动画1</div>
<svg style="left:421px;top:684px" width="15" height="15" viewBox="0 0 15 15" stroke="#fff" stroke-width="1.4"><path d="M7.5 1V14M1 7.5H14"/></svg>
<div class="abs panel" style="left:288px;top:712px;width:1306px;height:40px"></div>
<svg style="left:310px;top:723px" width="19" height="19" viewBox="0 0 19 19" fill="none" stroke="#5e5e62" stroke-width="1.4">
<path d="M9.3 1.5V11.3L2 16.5M9.3 11.3L16.8 16.5"/><path d="M7 3.8L9.3 1.3L11.6 3.8M1.3 13.7L1.6 17L4.8 17.2M13.8 17.2L17 17L17.3 13.7"/></svg>
<div class="t" style="left:336px;top:727px;font-size:13.5px;color:#5e5e62">位置</div>
<svg style="left:394px;top:723px" width="18" height="19" viewBox="0 0 18 19" fill="none" stroke="#5e5e62" stroke-width="1.4">
<path d="M9 1L16.5 5V14L9 18L1.5 14V5Z"/><path d="M1.5 5L9 9L16.5 5M9 9V18"/><path d="M1.5 5V14L9 18V9Z" fill="#5e5e62" fill-opacity="0.5"/></svg>
<div class="t" style="left:419px;top:727px;font-size:13.5px;color:#5e5e62">属性</div>
<svg style="left:476px;top:726px" width="20" height="14" viewBox="0 0 20 14" fill="none" stroke="#fff" stroke-width="1.6">
<rect x="1.2" y="1.8" width="11" height="10.4" rx="1"/><path d="M18.5 1.5L13.5 7L18.5 12.5Z" stroke-linejoin="round"/></svg>
<div class="t" style="left:503px;top:727px;font-size:13.5px">相机</div>
<svg style="left:561px;top:723px" width="18" height="20" viewBox="0 0 18 20" fill="none" stroke="#5e5e62" stroke-width="1.3">
<path d="M8.5 1V19"/><path d="M8.5 3L1.5 6.5V14L8.5 17.5"/><path d="M8.5 3L15.5 6.5V14L8.5 17.5M8.5 10.2L15.5 6.5" stroke-dasharray="2 1.5"/><path d="M1.5 6.5L8.5 10.2"/></svg>
<div class="t" style="left:587px;top:727px;font-size:13.5px;color:#5e5e62">显示</div>
<svg style="left:645px;top:724px" width="18" height="18" viewBox="0 0 18 18" fill="#5e5e62">
<circle cx="2.6" cy="2.6" r="2"/><circle cx="7" cy="7.4" r="2.6"/><circle cx="12.6" cy="13" r="3.4"/></svg>
<svg style="left:667px;top:730px" width="10" height="6" viewBox="0 0 10 6"><path d="M0.5 0.5H9.5L5 5.5Z" fill="#5e5e62"/></svg>
<div class="t" style="left:682px;top:727px;font-size:13.5px;color:#5e5e62">特效</div>
<svg style="left:739px;top:723px" width="20" height="20" viewBox="0 0 20 20" fill="none" stroke="#fff" stroke-width="1.4">
<path d="M17.5 8.5A8.3 8.3 0 1 0 9.5 18"/><path d="M10.5 5V12.5"/><circle cx="8" cy="12.6" r="2.5"/><path d="M10.5 5C11.5 6 12.8 6.3 13.3 6.6"/><path d="M15.5 13V19M12.5 16H18.5"/></svg>
<div class="t" style="left:766px;top:727px;font-size:13.5px">音频</div>
<svg style="left:823px;top:724px" width="19" height="18" viewBox="0 0 19 18" fill="none" stroke="#fff" stroke-width="1.6">
<path d="M15 1.5L17.5 4L15 6.5"/><path d="M17.3 4H6C3.3 4 1.5 5.5 1.5 7.5C1.5 9.3 3.3 9.8 6 9.8H13C15.7 9.8 17.5 10.8 17.5 12.7C17.5 14.7 15.7 15.3 13 15.3H2"/><path d="M4.5 12.8L2 15.3L4.5 17.8"/></svg>
<div class="t" style="left:849px;top:727px;font-size:13.5px">轨迹</div>
<svg style="left:908px;top:724px" width="16" height="19" viewBox="0 0 16 19" fill="none" stroke="#fff" stroke-width="1.5">
<path d="M1.3 1.3H14.7V13.5L8 17.8L1.3 13.5Z" stroke-linejoin="round"/></svg>
<div class="t" style="left:932px;top:727px;font-size:13.5px">工步</div>
<!-- playback -->
<svg style="left:1060px;top:723px" width="16" height="19" viewBox="0 0 16 19"><path d="M11 2.5V16L1.5 9.3Z" fill="#fff"/><path d="M13.8 1V18.5" stroke="#fff" stroke-width="1.5"/></svg>
<svg style="left:1114px;top:726px" width="12" height="13" viewBox="0 0 12 13"><path d="M0.8 0.6V12.4L11.2 6.5Z" fill="#fff"/></svg>
<div class="abs" style="left:1163.5px;top:726.5px;width:12px;height:12px;background:#fff;border-radius:1px"></div>
<svg style="left:1214px;top:723px" width="16" height="19" viewBox="0 0 16 19"><path d="M4.5 2.5V16L14 9.3Z" fill="#fff"/><path d="M1.8 1V18.5" stroke="#fff" stroke-width="1.5"/></svg>
<svg style="left:1255px;top:718px" width="45" height="30" viewBox="0 0 45 30" fill="none" stroke="#fff" stroke-width="2">
<path d="M25.9 12.6V21.4Q25.9 23.9 23.4 23.9H8Q5.9 23.9 5.9 21.4V11.8Q5.9 8.3 9 8.3H22"/><path d="M20.3 3.6L26.6 9.3H20.3Z" fill="#fff" stroke="none"/>
<text x="15.5" y="19.6" font-size="7.2" fill="#fff" stroke="none" text-anchor="middle" font-weight="bold" font-family="Liberation Sans">正常</text></svg>
<svg style="left:1285px;top:729px" width="10" height="7" viewBox="0 0 10 7"><path d="M0.5 0.8H9.5L5 6Z" fill="#fff"/></svg>
<svg style="left:1372px;top:725px" width="18" height="18" viewBox="0 0 18 18" fill="none" stroke="#fff" stroke-width="1.4">
<circle cx="7.5" cy="7.5" r="6.3"/><path d="M12 12L16.2 16.2M7.5 4.5V10.5M4.5 7.5H10.5"/></svg>
<div class="abs" style="left:1411px;top:731px;width:75px;height:4px;background:#59595c;border-radius:2px"></div>
<div class="abs" style="left:1411px;top:731px;width:10px;height:4px;background:#fff;border-radius:2px"></div>
<div class="abs" style="left:1419px;top:729px;width:5px;height:9px;background:#fff;border-radius:1px"></div>
<svg style="left:1509px;top:725px" width="18" height="18" viewBox="0 0 18 18" fill="none" stroke="#fff" stroke-width="1.4">
<circle cx="7.5" cy="7.5" r="6.3"/><path d="M12 12L16.2 16.2M4.5 7.5H10.5"/></svg>
<svg style="left:1556px;top:724px" width="13" height="18" viewBox="0 0 13 18" fill="none" stroke="#fff" stroke-width="1.4">
<path d="M6.5 1V12.5M1.5 7.5L6.5 12.5L11.5 7.5M1 16.5H12"/></svg>
<div class="abs" style="left:288px;top:752px;width:220px;height:150px;background:#171717;border-radius:0 0 0 5px"></div>
<div class="abs" style="left:508px;top:752px;width:1086px;height:30px;background:#111"></div>
<div class="abs" style="left:1584px;top:782px;width:10px;height:15px;background:#111"></div>
<svg style="left:508px;top:752px" width="1086" height="30" viewBox="0 0 1086 30"><text x="25.5" y="10.2" font-size="9.5" fill="#c8c8c8" text-anchor="middle" font-family="Liberation Sans">0</text><text x="145.5" y="10.2" font-size="9.5" fill="#c8c8c8" text-anchor="middle" font-family="Liberation Sans">1</text><text x="265.5" y="10.2" font-size="9.5" fill="#c8c8c8" text-anchor="middle" font-family="Liberation Sans">2</text><text x="385.5" y="10.2" font-size="9.5" fill="#c8c8c8" text-anchor="middle" font-family="Liberation Sans">3</text><text x="505.5" y="10.2" font-size="9.5" fill="#c8c8c8" text-anchor="middle" font-family="Liberation Sans">4</text><text x="625.5" y="10.2" font-size="9.5" fill="#c8c8c8" text-anchor="middle" font-family="Liberation Sans">5</text><text x="745.5" y="10.2" font-size="9.5" fill="#c8c8c8" text-anchor="middle" font-family="Liberation Sans">6</text><text x="865.5" y="10.2" font-size="9.5" fill="#c8c8c8" text-anchor="middle" font-family="Liberation Sans">7</text><text x="985.5" y="10.2" font-size="9.5" fill="#c8c8c8" text-anchor="middle" font-family="Liberation Sans">8</text><path d="M25.5 15V19M25.5 23V27M145.5 15V19M145.5 23V27M265.5 15V19M265.5 23V27M385.5 15V19M385.5 23V27M505.5 15V19M505.5 23V27M625.5 15V19M625.5 23V27M745.5 15V19M745.5 23V27M865.5 15V19M865.5 23V27M985.5 15V19M985.5 23V27" stroke="#e8e8e8" stroke-width="1.2"/><path d="M49.5 23V30M73.5 23V30M97.5 23V30M121.5 23V30M169.5 23V30M193.5 23V30M217.5 23V30M241.5 23V30M289.5 23V30M313.5 23V30M337.5 23V30M361.5 23V30M409.5 23V30M433.5 23V30M457.5 23V30M481.5 23V30M529.5 23V30M553.5 23V30M577.5 23V30M601.5 23V30M649.5 23V30M673.5 23V30M697.5 23V30M721.5 23V30M769.5 23V30M793.5 23V30M817.5 23V30M841.5 23V30M889.5 23V30M913.5 23V30M937.5 23V30M961.5 23V30M1009.5 23V30M1033.5 23V30M1057.5 23V30" stroke="#e8e8e8" stroke-width="1.2"/></svg>
<div class="abs" style="left:508px;top:782px;width:1076px;height:18px;background:#262626"></div>
<div class="abs" style="left:508px;top:802px;width:1076px;height:24px;background:#262626"></div>
<div class="abs" style="left:508px;top:828px;width:1076px;height:24px;background:#262626"></div>
<div class="abs" style="left:508px;top:854px;width:1076px;height:24px;background:#262626"></div>
<div class="abs" style="left:508px;top:880px;width:1076px;height:22px;background:#262626"></div>
<div class="abs" style="left:1584px;top:797px;width:10px;height:105px;background:#1f1f1f;border-radius:0 0 5px 0"></div>
<svg style="left:1584px;top:797px" width="10" height="10" viewBox="0 0 10 10"><path d="M2 6H8L5 3Z" fill="#444"/></svg>
<div class="t" style="left:318px;top:782.6px;font-size:12.5px;font-weight:bold">透明度</div>
<div class="t" style="left:318px;top:808.6px;font-size:12.5px;font-weight:bold">颜色</div>
<div class="t" style="left:308px;top:834.6px;font-size:12.5px;font-weight:bold">特效</div>
<div class="t" style="left:308px;top:860.6px;font-size:12.5px;font-weight:bold">相机</div>
<div class="t" style="left:308px;top:886.6px;font-size:12.5px;font-weight:bold">音频</div>
<div class="abs" style="left:772px;top:770px;width:2px;height:132px;background:#fff"></div>
<div class="abs" style="left:771px;top:767px;width:4.5px;height:10px;background:#fff;border-radius:1px"></div>
<div class="abs" style="left:769px;top:861px;width:8px;height:8px;background:#fff;transform:rotate(45deg)"></div>
<div class="abs" style="left:300px;top:851px;width:42px;height:28px;border:2px solid #ff0000"></div>
<svg style="left:0;top:0" width="1597" height="904" viewBox="0 0 1597 904">
<path d="M346.5 857.3L756 867.3" stroke="#ff0000" stroke-width="2.2"/><path d="M753 863.6L766 867.6L753 871.8L756 867.5Z" fill="#ff0000"/></svg>
</body></html>
